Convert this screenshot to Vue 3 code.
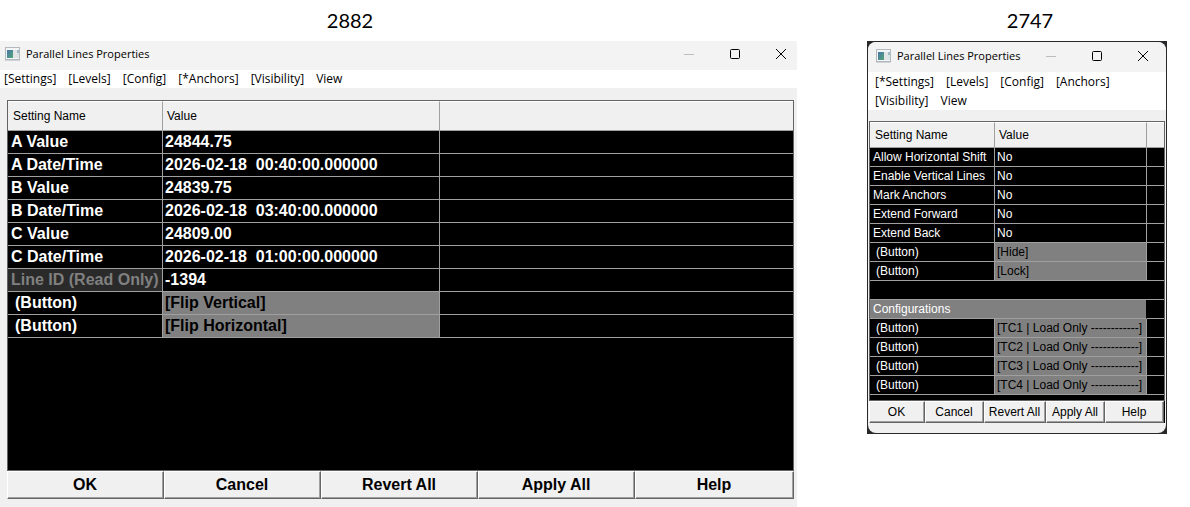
<script setup>
const dialogs = [
  {
    id: 'wide',
    build: '2882',
    menus: ['[Settings]', '[Levels]', '[Config]', '[*Anchors]', '[Visibility]', 'View'],
    rows: [
      { name: 'A Value', value: '24844.75' },
      { name: 'A Date/Time', value: '2026-02-18  00:40:00.000000' },
      { name: 'B Value', value: '24839.75' },
      { name: 'B Date/Time', value: '2026-02-18  03:40:00.000000' },
      { name: 'C Value', value: '24809.00' },
      { name: 'C Date/Time', value: '2026-02-18  01:00:00.000000' },
      { name: 'Line ID (Read Only)', value: '-1394', kind: 'readonly' },
      { name: '(Button)', value: '[Flip Vertical]', kind: 'action' },
      { name: '(Button)', value: '[Flip Horizontal]', kind: 'action' },
    ],
  },
  {
    id: 'compact',
    build: '2747',
    menus: ['[*Settings]', '[Levels]', '[Config]', '[Anchors]', '[Visibility]', 'View'],
    rows: [
      { name: 'Allow Horizontal Shift', value: 'No' },
      { name: 'Enable Vertical Lines', value: 'No' },
      { name: 'Mark Anchors', value: 'No' },
      { name: 'Extend Forward', value: 'No' },
      { name: 'Extend Back', value: 'No' },
      { name: '(Button)', value: '[Hide]', kind: 'action' },
      { name: '(Button)', value: '[Lock]', kind: 'action' },
      { kind: 'blank' },
      { name: 'Configurations', kind: 'section' },
      { name: '(Button)', value: '[TC1 | Load Only ------------]', kind: 'action' },
      { name: '(Button)', value: '[TC2 | Load Only ------------]', kind: 'action' },
      { name: '(Button)', value: '[TC3 | Load Only ------------]', kind: 'action' },
      { name: '(Button)', value: '[TC4 | Load Only ------------]', kind: 'action' },
    ],
  },
]
const commands = ['OK', 'Cancel', 'Revert All', 'Apply All', 'Help']
</script>

<template>
  <main class="page">
    <section v-for="d in dialogs" :key="d.id" class="build" :class="d.id">
      <h2 class="caption">{{ d.build }}</h2>
      <div class="frame">
        <div class="window">
          <header class="titlebar">
            <svg class="app-icon" width="16" height="14" viewBox="0 0 16 14" aria-hidden="true">
              <defs>
                <linearGradient :id="'pane-' + d.id" x1="0" y1="0" x2="1" y2="1">
                  <stop offset="0" stop-color="#4a74a8" />
                  <stop offset="1" stop-color="#4fa878" />
                </linearGradient>
              </defs>
              <rect x="0.5" y="0.5" width="14" height="12" fill="#f4f5f6" stroke="#b4b9bf" />
              <path d="M0 13.5H15" stroke="#cfd2d6" />
              <rect x="2" y="3" width="6" height="8" :fill="'url(#pane-' + d.id + ')'" />
              <rect x="8" y="3" width="4" height="8" fill="#e2e4e6" />
              <rect x="12" y="3" width="2" height="3" fill="#9dbcc8" />
              <rect x="12" y="6" width="2" height="5" fill="#dce6e0" />
            </svg>
            <h1 class="title">Parallel Lines Properties</h1>
            <div class="controls">
              <button type="button" aria-label="Minimize" disabled>
                <svg width="10" height="10" viewBox="0 0 10 10"><path d="M0 5.5H10" stroke="#bdbdbd" fill="none" /></svg>
              </button>
              <button type="button" aria-label="Maximize">
                <svg width="10" height="10" viewBox="0 0 10 10"><rect x="0.5" y="0.5" width="9" height="9" rx="1" stroke="#000" fill="none" /></svg>
              </button>
              <button type="button" aria-label="Close">
                <svg width="10" height="10" viewBox="0 0 10 10"><path d="M0 0L10 10M10 0L0 10" stroke="#000" fill="none" /></svg>
              </button>
            </div>
          </header>

          <nav class="menubar">
            <button v-for="m in d.menus" :key="m" type="button">{{ m }}</button>
          </nav>

          <div class="client">
            <div class="sheet">
              <table>
                <colgroup>
                  <col class="col-name" />
                  <col class="col-value" />
                  <col />
                </colgroup>
                <thead>
                  <tr>
                    <th scope="col">Setting Name</th>
                    <th scope="col">Value</th>
                    <th></th>
                  </tr>
                </thead>
                <tbody>
                  <tr v-for="(r, i) in d.rows" :key="i" :class="r.kind">
                    <td v-if="r.kind === 'blank'" colspan="3"></td>
                    <template v-else-if="r.kind === 'section'">
                      <td colspan="2">{{ r.name }}</td>
                      <td></td>
                    </template>
                    <template v-else>
                      <td>{{ r.name }}</td>
                      <td>
                        <button v-if="r.kind === 'action'" type="button">{{ r.value }}</button>
                        <template v-else>{{ r.value }}</template>
                      </td>
                      <td></td>
                    </template>
                  </tr>
                </tbody>
              </table>
            </div>
            <div class="commands">
              <button v-for="c in commands" :key="c" type="button">{{ c }}</button>
            </div>
          </div>
        </div>
      </div>
    </section>
  </main>
</template>

<style>
body {
  margin: 0;
  background: #fff;
}
</style>

<style scoped>
.page {
  box-sizing: border-box;
  min-height: 100vh;
  display: flex;
  gap: 70px;
  padding-right: 23px;
  color: #000;
  font-family: "Liberation Sans", Arial, sans-serif;
}
.build {
  display: flex;
  flex-direction: column;
}
.wide {
  --row: 23px;
  --head: 30px;
  --name: 155px;
  --value: 277px;
  flex: 1;
  min-width: 0;
}
.compact {
  --row: 19px;
  --head: 26px;
  --name: 125px;
  --value: 152px;
  flex: none;
  width: 300px;
}
.caption {
  margin: 0;
  height: 41px;
  box-sizing: border-box;
  font: 400 20px/24px Lato, sans-serif;
  padding-top: 8px;
  text-align: center;
}
.wide .caption {
  padding-right: 97px;
}
.compact .caption {
  padding-left: 26px;
}
.frame {
  display: flex;
  flex-direction: column;
}
.wide .frame {
  flex: 1;
}
.compact .frame {
  background: #26282a;
  padding: 1px;
}
.window {
  flex: 1;
  display: flex;
  flex-direction: column;
  background: #f0f0f0;
  overflow: hidden;
}
.compact .window {
  border-radius: 8px;
}
button {
  border: 0;
  padding: 0;
  background: none;
  color: inherit;
  font: inherit;
}

.titlebar {
  box-sizing: border-box;
  display: flex;
  align-items: center;
  height: 29px;
  padding: 0 11px 3px 5px;
  background: #f3f3f3;
}
.compact .titlebar {
  height: 30px;
  padding: 0 18px 2px 8px;
}
.app-icon {
  flex: none;
  margin-right: 5px;
}
.title {
  flex: 1;
  margin: 0;
  font: 400 11px/16px "Open Sans", sans-serif;
  white-space: nowrap;
}
.controls {
  display: flex;
  gap: 36px;
}
.controls button,
.controls svg {
  display: block;
}

.menubar {
  display: flex;
  flex-wrap: wrap;
  column-gap: 12px;
  padding: 0 4px;
  background: #fff;
  font: 400 12px/18px "Open Sans", sans-serif;
}
.compact .menubar {
  padding: 0 7px;
  line-height: 19px;
}

.client {
  flex: 1;
  display: flex;
  flex-direction: column;
  padding: 12px 3px 8px 7px;
}
.compact .client {
  padding: 11px 1px 10px;
}
.sheet {
  flex: 1;
  background: #000;
  border: 1px solid #646464;
}
.compact .sheet {
  padding-bottom: 5px;
}
table {
  width: 100%;
  table-layout: fixed;
  border-collapse: separate;
  border-spacing: 0;
  color: #fff;
  font-size: 12px;
}
.wide tbody {
  font-size: 16px;
  font-weight: 700;
}
.col-name {
  width: var(--name);
}
.col-value {
  width: var(--value);
}
th,
td {
  box-sizing: border-box;
  height: var(--row);
  padding: 0 0 0 3px;
  border: solid #a0a0a0;
  border-width: 0 1px 1px 0;
  line-height: 18px;
  text-align: left;
  white-space: pre;
}
td + td {
  padding-left: 2px;
}
th {
  height: var(--head);
  padding-left: 5px;
  background: #f0f0f0;
  border-top: 1px solid #fff;
  color: #000;
  font-weight: 400;
}
th + th {
  padding-left: 4px;
}
th:last-child,
td:last-child {
  border-right: 0;
}
.readonly td:first-child {
  background: #2a2a2a;
  color: #808080;
}
.action td:first-child {
  padding-left: 7px;
}
.compact .action td:first-child {
  padding-left: 6px;
}
.action td:nth-child(2) {
  background: #808080;
  color: #000;
}
.action button {
  display: block;
  width: 100%;
  text-align: left;
  white-space: pre;
}
.section td:first-child {
  background: #808080;
  border-right-color: #000;
}

.commands {
  display: grid;
  grid-template-columns: 157fr 157fr 157fr 157fr 159fr;
  font-size: 16px;
  font-weight: 700;
}
.compact .commands {
  grid-template-columns: 56fr 59fr 62fr 59fr 59fr;
  border-right: 1px solid #000;
  font-size: 12px;
  font-weight: 400;
}
.commands button {
  height: 28px;
  padding-right: 1px;
  border: 1px solid;
  border-color: #fff #646464 #646464 #fff;
  background: #f0f0f0;
  box-shadow: inset -1px -1px #a0a0a0;
  white-space: nowrap;
}
.compact .commands button {
  height: 22px;
}
</style>
